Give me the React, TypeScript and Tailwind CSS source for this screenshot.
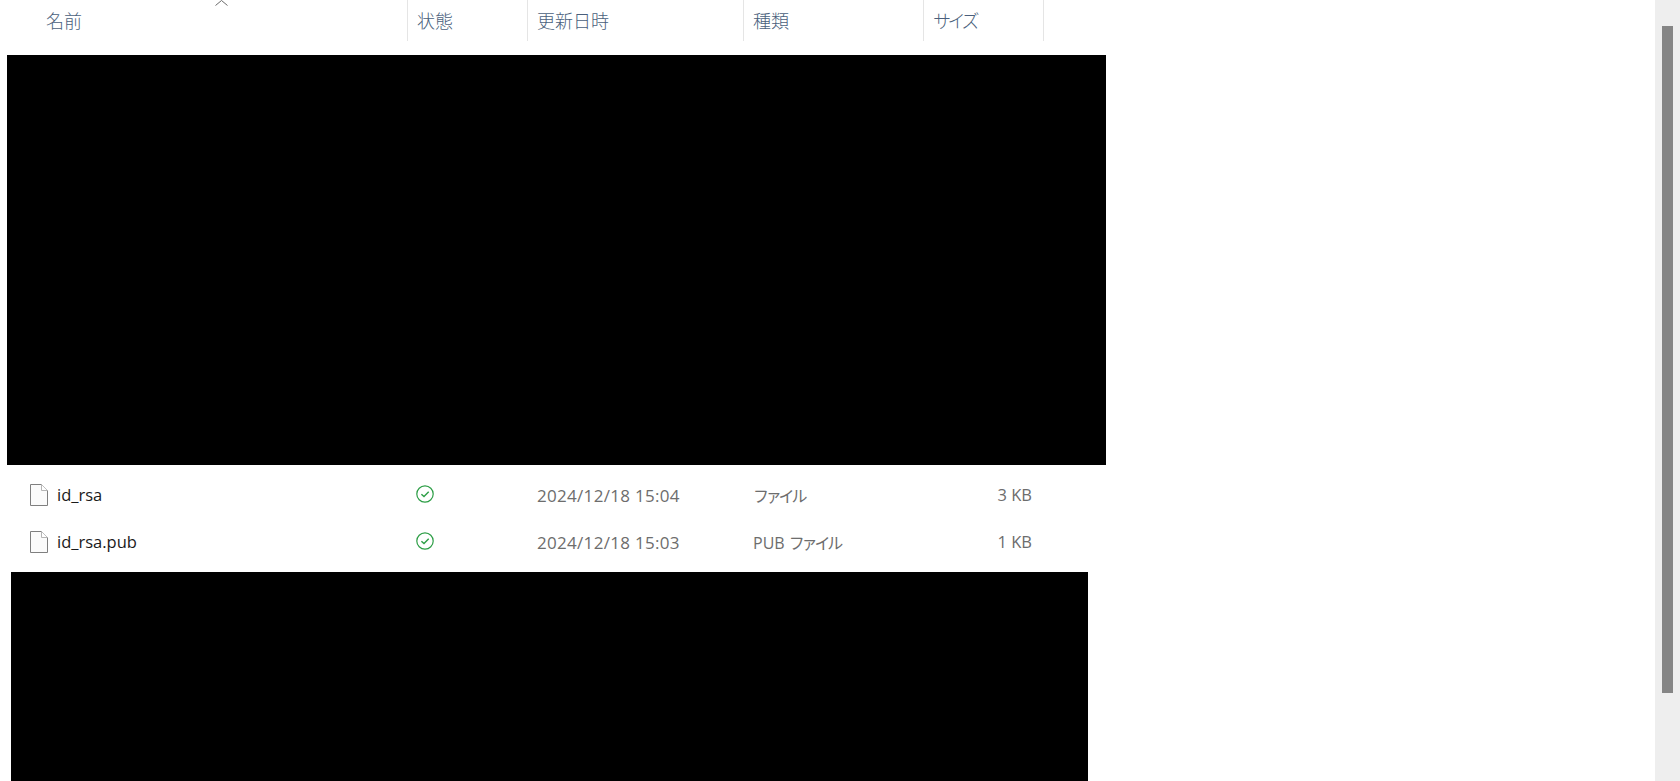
import React from "react";

const headerFont = "font-['Noto_Sans_CJK_JP',sans-serif]";
const rowFont = "font-['Open_Sans','Noto_Sans_CJK_JP',sans-serif]";

const FileIcon: React.FC = () => (
  <svg width="18" height="22" viewBox="0 0 18 22" className="mb-[2px] shrink-0">
    <path d="M0.5 0.5H11.5L17.5 6.5V21.5H0.5Z" fill="#fbfbfb" stroke="#7f7f7f" />
    <path d="M11.5 0.5V6.5H17.5" fill="#ffffff" stroke="#b5b5b5" />
  </svg>
);

const SyncedIcon: React.FC = () => (
  <svg width="18" height="18" viewBox="0 0 18 18" className="shrink-0">
    <circle cx="9" cy="9" r="8.2" fill="none" stroke="#2d9e46" strokeWidth="1.2" />
    <path d="M5.4 9.2L8 11.6L12.7 6.8" fill="none" stroke="#2d9e46" strokeWidth="1.4" />
  </svg>
);

const rows = [
  { name: "id_rsa", date: "2024/12/18 15:04", prefix: "", size: "3 KB" },
  { name: "id_rsa.pub", date: "2024/12/18 15:03", prefix: "PUB ", size: "1 KB" },
];

export default function App() {
  return (
    <div className="flex h-screen overflow-hidden bg-white">
      <div className="flex min-w-0 flex-1 flex-col">
        {/* Column headers */}
        <div className={`flex h-[41px] shrink-0 text-[18px] text-[#4a5f7c] ${headerFont} font-light`}>
          <div className="relative flex w-[407px] items-center pl-[46px]">
            名前
            <svg width="13" height="6" viewBox="0 0 13 6" className="absolute left-[215px] top-0">
              <path d="M0.5 5.5L6.5 0.5L12.5 5.5" fill="none" stroke="#6b6b6b" />
            </svg>
          </div>
          <div className="flex w-[120px] items-center border-l border-[#e5e5e5] pl-[9px]">状態</div>
          <div className="flex w-[216px] items-center border-l border-[#e5e5e5] pl-[9px]">更新日時</div>
          <div className="flex w-[180px] items-center border-l border-[#e5e5e5] pl-[9px]">種類</div>
          <div className="flex w-[121px] items-center border-x border-[#e5e5e5] pl-[9px] tracking-[-3.5px]">サイズ</div>
        </div>

        <div className="ml-[7px] mt-[14px] h-[410px] w-[1099px] shrink-0 bg-black" />

        {/* File rows */}
        <div className={`mt-[7px] flex flex-col text-[17px] ${rowFont}`}>
          {rows.map((row) => (
            <div key={row.name} className="flex h-[47px] items-center">
              <div className="flex w-[407px] items-center gap-[9px] pl-[30px] text-[16.5px] text-[#1a1a1a]">
                <FileIcon />
                <span>{row.name}</span>
              </div>
              <div className="flex w-[120px] items-center pb-[3px] pl-[9px]">
                <SyncedIcon />
              </div>
              <div className="w-[216px] pl-[10px] tracking-[0.3px] text-[#6d6d6d]">{row.date}</div>
              <div className="w-[180px] pl-[10px] text-[16px] text-[#6d6d6d]">
                {row.prefix}
                <span className="tracking-[-3.2px]">ファイル</span>
              </div>
              <div className="w-[120px] pr-[11px] text-right text-[16.5px] text-[#6d6d6d]">{row.size}</div>
            </div>
          ))}
        </div>

        <div className="ml-[11px] mt-[6px] w-[1077px] flex-1 bg-black" />
      </div>

      {/* Scrollbar */}
      <div className="w-[25px] shrink-0 bg-[#eeeeee] pt-[26px]">
        <div className="ml-[7px] h-[667px] w-[11px] bg-[#858585]" />
      </div>
    </div>
  );
}
